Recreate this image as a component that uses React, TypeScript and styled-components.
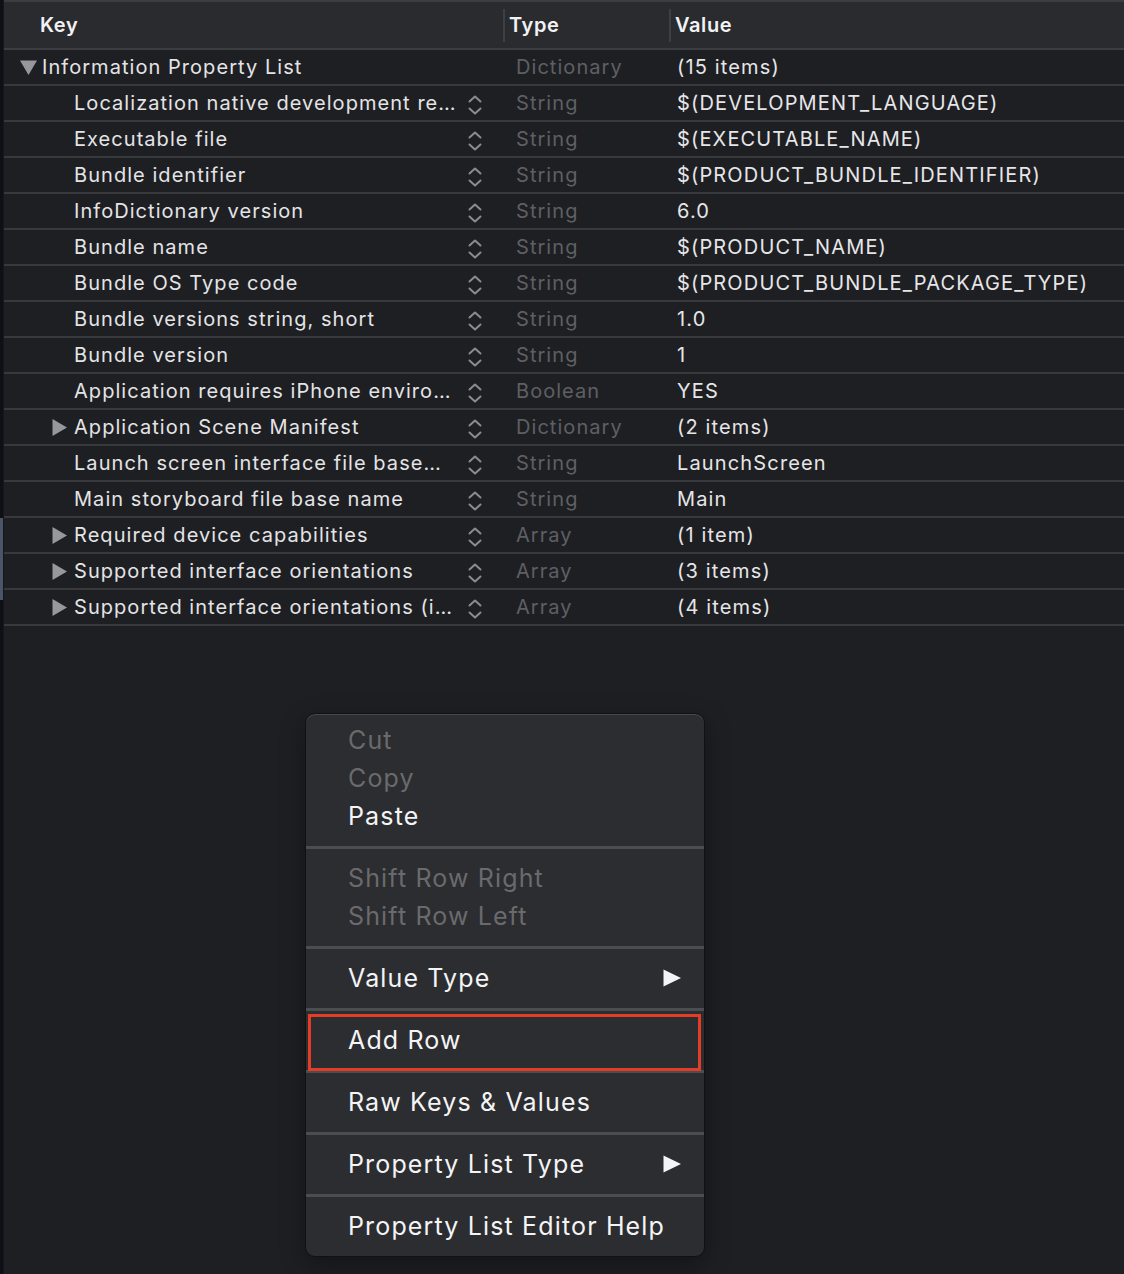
import React from 'react';
import styled, { createGlobalStyle } from 'styled-components';

const colors = {
    page: '#1e1f23',
    header: '#2a2b2f',
    line: '#38393d',
    keyText: '#e4e4e6',
    typeText: '#5e5f63',
    valueText: '#e6e6e8',
    disclosure: '#98989c',
    menu: '#2c2d30',
    menuLine: '#4c4d51',
    enabled: '#f4f4f6',
    disabled: '#6a6a6d',
    red: '#e43d27',
};

interface PlistRow {
    key: string;
    type: string;
    value: string;
    level: number;
    disclosure?: 'open' | 'closed';
}

const rows: PlistRow[] = [
    { key: 'Information Property List', type: 'Dictionary', value: '(15 items)', level: 0, disclosure: 'open' },
    { key: 'Localization native development re…', type: 'String', value: '$(DEVELOPMENT_LANGUAGE)', level: 1 },
    { key: 'Executable file', type: 'String', value: '$(EXECUTABLE_NAME)', level: 1 },
    { key: 'Bundle identifier', type: 'String', value: '$(PRODUCT_BUNDLE_IDENTIFIER)', level: 1 },
    { key: 'InfoDictionary version', type: 'String', value: '6.0', level: 1 },
    { key: 'Bundle name', type: 'String', value: '$(PRODUCT_NAME)', level: 1 },
    { key: 'Bundle OS Type code', type: 'String', value: '$(PRODUCT_BUNDLE_PACKAGE_TYPE)', level: 1 },
    { key: 'Bundle versions string, short', type: 'String', value: '1.0', level: 1 },
    { key: 'Bundle version', type: 'String', value: '1', level: 1 },
    { key: 'Application requires iPhone enviro…', type: 'Boolean', value: 'YES', level: 1 },
    { key: 'Application Scene Manifest', type: 'Dictionary', value: '(2 items)', level: 1, disclosure: 'closed' },
    { key: 'Launch screen interface file base…', type: 'String', value: 'LaunchScreen', level: 1 },
    { key: 'Main storyboard file base name', type: 'String', value: 'Main', level: 1 },
    { key: 'Required device capabilities', type: 'Array', value: '(1 item)', level: 1, disclosure: 'closed' },
    { key: 'Supported interface orientations', type: 'Array', value: '(3 items)', level: 1, disclosure: 'closed' },
    { key: 'Supported interface orientations (i…', type: 'Array', value: '(4 items)', level: 1, disclosure: 'closed' },
];

interface MenuItem {
    label: string;
    disabled?: boolean;
    submenu?: boolean;
    boxed?: boolean;
}

const menuGroups: MenuItem[][] = [
    [{ label: 'Cut', disabled: true }, { label: 'Copy', disabled: true }, { label: 'Paste' }],
    [{ label: 'Shift Row Right', disabled: true }, { label: 'Shift Row Left', disabled: true }],
    [{ label: 'Value Type', submenu: true }],
    [{ label: 'Add Row', boxed: true }],
    [{ label: 'Raw Keys & Values' }],
    [{ label: 'Property List Type', submenu: true }],
    [{ label: 'Property List Editor Help' }],
];

const Stepper = () => (
    <StepperIcon width="16" height="24" viewBox="0 0 16 24">
        <path d="M2.5 8.5 L8 3.5 L13.5 8.5" />
        <path d="M2.5 15.5 L8 20.5 L13.5 15.5" />
    </StepperIcon>
);

const Triangle = ({ open }: { open: boolean }) =>
    open ? (
        <TriangleIcon width="17" height="15" viewBox="0 0 17 15">
            <polygon points="0,0.5 17,0.5 8.5,15" />
        </TriangleIcon>
    ) : (
        <TriangleIcon width="15" height="17" viewBox="0 0 15 17">
            <polygon points="0.5,0 15,8.5 0.5,17" />
        </TriangleIcon>
    );

const App = () => {
    return (
        <>
            <GlobalStyle />
            <Window>
                <Gutter />
                <Editor>
                    <HeaderRow>
                        <HeaderCell $indent={36}>Key</HeaderCell>
                        <HeaderCell $indent={6} $divider>
                            Type
                        </HeaderCell>
                        <HeaderCell $indent={6} $divider>
                            Value
                        </HeaderCell>
                    </HeaderRow>
                    {rows.map((row) => (
                        <Row key={row.key}>
                            <KeyCell $level={row.level}>
                                <Disclosure>
                                    {row.disclosure && <Triangle open={row.disclosure === 'open'} />}
                                </Disclosure>
                                <KeyText>{row.key}</KeyText>
                                {row.level > 0 && <Stepper />}
                            </KeyCell>
                            <TypeCell>{row.type}</TypeCell>
                            <ValueCell>{row.value}</ValueCell>
                        </Row>
                    ))}
                    <EmptyArea>
                        <ContextMenu>
                            {menuGroups.map((group, i) => (
                                <MenuGroup key={i}>
                                    {group.map((item) => (
                                        <MenuEntry
                                            key={item.label}
                                            $disabled={item.disabled}
                                            $boxed={item.boxed}>
                                            <span>{item.label}</span>
                                            {item.submenu && (
                                                <SubmenuArrow width="18" height="18" viewBox="0 0 18 18">
                                                    <polygon points="0.5,0.5 18,9 0.5,17.5" />
                                                </SubmenuArrow>
                                            )}
                                        </MenuEntry>
                                    ))}
                                </MenuGroup>
                            ))}
                        </ContextMenu>
                    </EmptyArea>
                </Editor>
            </Window>
        </>
    );
};

const GlobalStyle = createGlobalStyle`
    html, body {
        margin: 0;
        padding: 0;
        background: ${colors.page};
    }
    body {
        font-family: Inter, "Noto Sans", "Liberation Sans", sans-serif;
        -webkit-font-smoothing: antialiased;
    }
`;

const Window = styled.div`
    display: flex;
    width: 1124px;
    height: 1274px;
    overflow: hidden;
    background: ${colors.page};
`;

const Gutter = styled.div`
    width: 4px;
    flex: none;
    background: linear-gradient(
        to bottom,
        #0d1016 0,
        #0d1016 518px,
        #4b5568 518px,
        #4b5568 600px,
        #0d1016 600px
    );
    border-right: 1px solid #15171c;
    box-sizing: border-box;
`;

const Editor = styled.div`
    flex: 1;
    display: flex;
    flex-direction: column;
    min-width: 0;
`;

const columns = '499px 166px 1fr';

const HeaderRow = styled.div`
    display: grid;
    grid-template-columns: ${columns};
    height: 46px;
    background: ${colors.header};
    border-top: 2px solid #3c3d41;
    border-bottom: 2px solid #3c3d41;
`;

const HeaderCell = styled.div<{ $indent: number; $divider?: boolean }>`
    position: relative;
    display: flex;
    align-items: center;
    padding-left: ${({ $indent }) => $indent}px;
    font-size: 20px;
    font-weight: 600;
    color: #f2f2f4;
    letter-spacing: 0.6px;

    ${({ $divider }) =>
        $divider &&
        `
        &::before {
            content: '';
            position: absolute;
            left: 0;
            top: 7px;
            bottom: 6px;
            width: 2px;
            background: #3e3f43;
        }
    `}
`;

const Row = styled.div`
    display: grid;
    grid-template-columns: ${columns};
    height: 34px;
    border-bottom: 2px solid ${colors.line};
    font-size: 20px;
    letter-spacing: 1.05px;
    white-space: nowrap;
`;

const KeyCell = styled.div<{ $level: number }>`
    display: flex;
    align-items: center;
    padding-left: ${({ $level }) => 16 + $level * 32}px;
    padding-right: 20px;
    color: ${colors.keyText};
    overflow: hidden;
`;

const Disclosure = styled.span`
    width: 22px;
    flex: none;
    display: flex;
    align-items: center;
    justify-content: flex-start;
`;

const TriangleIcon = styled.svg`
    fill: ${colors.disclosure};
`;

const KeyText = styled.span`
    flex: 1;
    overflow: hidden;
`;

const StepperIcon = styled.svg`
    flex: none;
    fill: none;
    stroke: #8c8c90;
    stroke-width: 2;
    stroke-linecap: round;
    stroke-linejoin: round;
    margin-top: 4px;
`;

const TypeCell = styled.div`
    display: flex;
    align-items: center;
    padding-left: 13px;
    color: ${colors.typeText};
`;

const ValueCell = styled.div`
    display: flex;
    align-items: center;
    padding-left: 8px;
    color: ${colors.valueText};
    letter-spacing: 1.15px;
`;

const EmptyArea = styled.div`
    position: relative;
    flex: 1;
`;

const ContextMenu = styled.div`
    position: absolute;
    left: 301px;
    top: 87px;
    width: 398px;
    background: ${colors.menu};
    border: 1px solid #111114;
    border-radius: 10px;
    box-shadow: inset 0 1px 0 #48494d, 0 8px 24px rgba(0, 0, 0, 0.35);
    overflow: hidden;
    font-size: 25px;
    letter-spacing: 1.15px;
`;

const MenuGroup = styled.div`
    padding: 10px 0 11px;
    border-top: 3px solid ${colors.menuLine};

    &:first-child {
        border-top: none;
        padding-top: 7px;
    }
`;

const MenuEntry = styled.div<{ $disabled?: boolean; $boxed?: boolean }>`
    position: relative;
    display: flex;
    align-items: center;
    height: 38px;
    padding: 0 23px 0 42px;
    color: ${({ $disabled }) => ($disabled ? colors.disabled : colors.enabled)};

    ${({ $boxed }) =>
        $boxed &&
        `
        &::after {
            content: '';
            position: absolute;
            left: 2px;
            right: 3px;
            top: -7px;
            bottom: -12px;
            border: 3px solid ${colors.red};
        }
    `}
`;

const SubmenuArrow = styled.svg`
    margin-left: auto;
    fill: ${colors.enabled};
`;

export default App;
